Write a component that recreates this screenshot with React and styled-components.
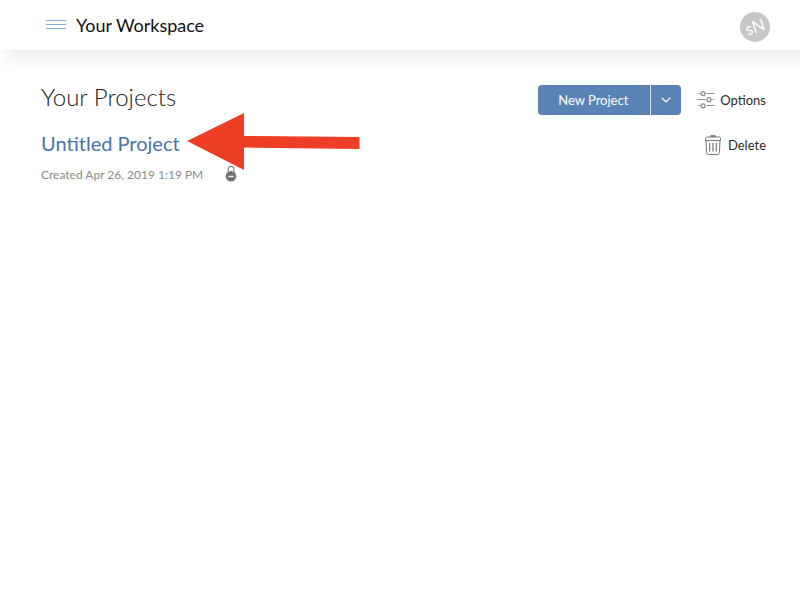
import React from 'react';
import styled, { createGlobalStyle } from 'styled-components';

const GlobalStyle = createGlobalStyle`
  * { box-sizing: border-box; }
  body { margin: 0; background: #fff; font-family: Lato, "Open Sans", sans-serif; }
  button { font-family: inherit; border: 0; padding: 0; background: none; color: inherit; }
  h1, h2, p { margin: 0; font-weight: 400; }
  svg { display: block; flex: none; }
`;

const Page = styled.div`
  height: 600px;
  overflow: hidden;
  background: #fff;
`;

const Header = styled.header`
  height: 50px;
  padding: 2px 30px 0 46px;
  display: flex;
  align-items: center;
`;

const MenuButton = styled.button`
  width: 20px;
  margin: -3px 10px 0 0;
`;

const WorkspaceName = styled.h1`
  font-size: 18px;
  line-height: 24px;
  margin-top: -2px;
  letter-spacing: -0.02px;
  color: #111;
  flex: 1;
`;

const Avatar = styled.div`
  width: 30px;
  height: 30px;
  margin-top: 2px;
  border-radius: 50%;
  background: #c6c6c6;
  color: #fff;
  display: grid;
  place-items: center;
  font-size: 17px;
  line-height: 20px;
`;

const Initials = styled.span`
  transform: rotate(-18deg);
`;

const Shade = styled.div`
  height: 22px;
  background:
    linear-gradient(90deg, #fff, rgba(255, 255, 255, 0.5) 7px, rgba(255, 255, 255, 0) 20px),
    linear-gradient(#ececec, #f4f4f4 30%, #fbfbfb 65%, #fff);
`;

const Content = styled.main`
  padding: 13px 34px 0 41px;
`;

const TitleRow = styled.div`
  height: 30px;
  display: flex;
  align-items: center;
  justify-content: space-between;
`;

const Title = styled.h2`
  font-size: 24px;
  line-height: 30px;
  font-weight: 300;
  color: #222;
  margin-top: -6px;
`;

const Actions = styled.div`
  display: flex;
  align-items: center;
`;

const SplitButton = styled.div`
  display: flex;
  gap: 1px;
  height: 30px;
  margin-right: 16px;
  border-radius: 4px;
  overflow: hidden;
  background: #dbe5f0;
`;

const SplitPart = styled.button`
  width: ${(p) => p.$width}px;
  padding-right: ${(p) => p.$inset || 0}px;
  display: grid;
  place-items: center;
  background: #5883b4;
  color: #fff;
  font-size: 13px;
  line-height: 16px;
`;

const Action = styled.button`
  display: flex;
  align-items: center;
  gap: ${(p) => p.$gap}px;
  font-size: 13px;
  line-height: 16px;
  color: #2b2b2b;
`;

const ProjectRow = styled.div`
  display: flex;
  justify-content: space-between;
  align-items: flex-start;
  padding-top: 14px;
`;

const ProjectInfo = styled.div`
  position: relative;
`;

const ProjectLink = styled.h2`
  font-size: 20px;
  line-height: 28px;
  color: #4474ad;
`;

const Meta = styled.div`
  display: flex;
  align-items: center;
  gap: 22px;
  height: 18px;
  margin-top: 9px;
`;

const Created = styled.p`
  font-size: 12px;
  line-height: 18px;
  color: #8a8a8a;
`;

const LockIcon = styled.svg`
  margin-top: -2px;
`;

const DeleteSlot = styled.div`
  padding-top: 6px;
`;

const Pointer = styled.svg`
  position: absolute;
  left: 146px;
  top: -16px;
`;

export default function App() {
  return (
    <Page>
      <GlobalStyle />
      <Header>
        <MenuButton aria-label="Menu">
          <svg width="20" height="10" fill="#83afe0">
            <path d="M0 0h20v1H0zM0 4h20v1H0zM0 8h20v1H0z" />
          </svg>
        </MenuButton>
        <WorkspaceName>Your Workspace</WorkspaceName>
        <Avatar><Initials>sN</Initials></Avatar>
      </Header>
      <Shade />
      <Content>
        <TitleRow>
          <Title>Your Projects</Title>
          <Actions>
            <SplitButton>
              <SplitPart $width={112} $inset={2}><span>New Project</span></SplitPart>
              <SplitPart $width={30} aria-label="More project types">
                <svg width="10" height="6" fill="none" stroke="#fff" strokeWidth="1.2">
                  <path d="M.7 .8 5 5 9.3 .8" />
                </svg>
              </SplitPart>
            </SplitButton>
            <Action $gap={5}>
              <svg width="18" height="18" fill="none" stroke="#8a8a8a" strokeWidth="1">
                <path d="M.5 2.5h1M2.3 2.5h1.2M9.5 2.5h8M.5 8.5h8M14.7 8.5h1M16.6 8.5h1M.5 14.5h1M2.3 14.5h1.2M9.5 14.5h8" />
                <circle cx="6" cy="2.6" r="2" strokeWidth="1.2" />
                <circle cx="12" cy="8.7" r="2" strokeWidth="1.2" />
                <circle cx="6" cy="14.8" r="2" strokeWidth="1.2" />
              </svg>
              Options
            </Action>
          </Actions>
        </TitleRow>
        <ProjectRow>
          <ProjectInfo>
            <ProjectLink>Untitled Project</ProjectLink>
            <Meta>
              <Created>Created Apr 26, 2019 1:19 PM</Created>
              <LockIcon width="12" height="18" fill="none">
                <path d="M3.2 8V4.2a2.8 2.8 0 0 1 5.6 0V8" stroke="#888" strokeWidth="1.1" />
                <circle cx="6" cy="11.3" r="5.3" fill="#707070" />
                <path d="M3.3 11.5h5.4" stroke="#e8e8e8" strokeWidth="1.4" />
              </LockIcon>
            </Meta>
            <Pointer width="174" height="60">
              <path d="M0 28 57 0v23l115.5 1v12L57 34.5V57z" fill="#ee3f26" />
            </Pointer>
          </ProjectInfo>
          <DeleteSlot>
            <Action $gap={7}>
              <svg width="16" height="20" fill="none" stroke="#777" strokeWidth="1">
                <path d="M5.5 1h5" strokeWidth="1.8" />
                <path d="M.5 5.5V4c0-1.4.6-2 1.8-2h11.4c1.2 0 1.8.6 1.8 2v1.5zM1 5.5l.6 12.3c.1 1.1.5 1.7 1.5 1.7h9.8c1 0 1.4-.6 1.5-1.7L15 5.5" />
                <path d="M4.7 8v8.5M8 8v8.5M11.3 8v8.5" strokeWidth="1.2" />
              </svg>
              Delete
            </Action>
          </DeleteSlot>
        </ProjectRow>
      </Content>
    </Page>
  );
}
